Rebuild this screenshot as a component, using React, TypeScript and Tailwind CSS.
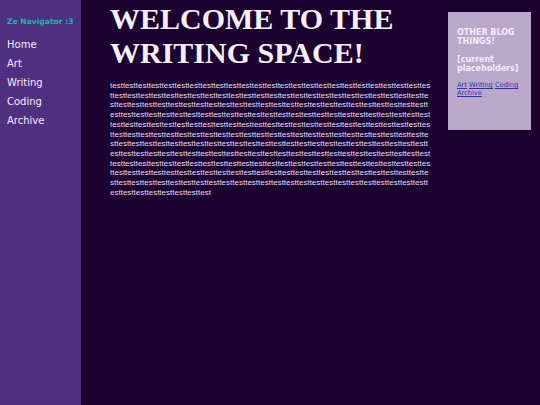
const body = "test".repeat(280);

const navLinks = ["Home", "Art", "Writing", "Coding", "Archive"];

export default function App() {
  return (
    <div className="flex min-h-[405px] bg-[#1b0030]">
      <nav className="w-[81px] shrink-0 bg-[#4f2f80] px-[7px] pt-[17px] font-['DejaVu_Sans',sans-serif]">
        <p className="whitespace-nowrap text-[7.6px] font-bold leading-[10px] text-[#22b1a8]">Ze Navigator :3</p>
        <ul className="mt-[8px] flex flex-col">
          {navLinks.map((l) => (
            <li key={l} className="text-[10px] leading-[19px] text-[#f4eefa]">
              {l}
            </li>
          ))}
        </ul>
      </nav>

      <main className="ml-[29px] w-[322px] shrink-0 pt-[2px]">
        <h1 className="font-['Liberation_Serif',serif] text-[30px] font-bold leading-[34px] text-[#f6f0fa]">
          WELCOME TO THE WRITING SPACE!
        </h1>
        <p className="mt-[11px] break-all font-['Liberation_Sans',sans-serif] text-[8px] leading-[9.7px] text-[#e2daee]">
          {body}
        </p>
      </main>

      <aside className="ml-[16px] mt-[12px] h-[118px] w-[83px] shrink-0 bg-[#b9a8ca] px-[9px] pt-[16px] font-['DejaVu_Sans',sans-serif] text-[8px] font-bold leading-[9.3px] text-[#f3eef8]">
        <p>OTHER BLOG THINGS!</p>
        <p className="mt-[8px]">[current placeholders]</p>
        <p className="mt-[8px] text-[6.67px] font-normal leading-[8px] text-[#2b2fb8]">
          <a href="#" className="underline">Art</a>{" "}
          <a href="#" className="underline">Writing</a>{" "}
          <a href="#" className="underline">Coding</a>{" "}
          <a href="#" className="underline">Archive</a>
        </p>
      </aside>
    </div>
  );
}
